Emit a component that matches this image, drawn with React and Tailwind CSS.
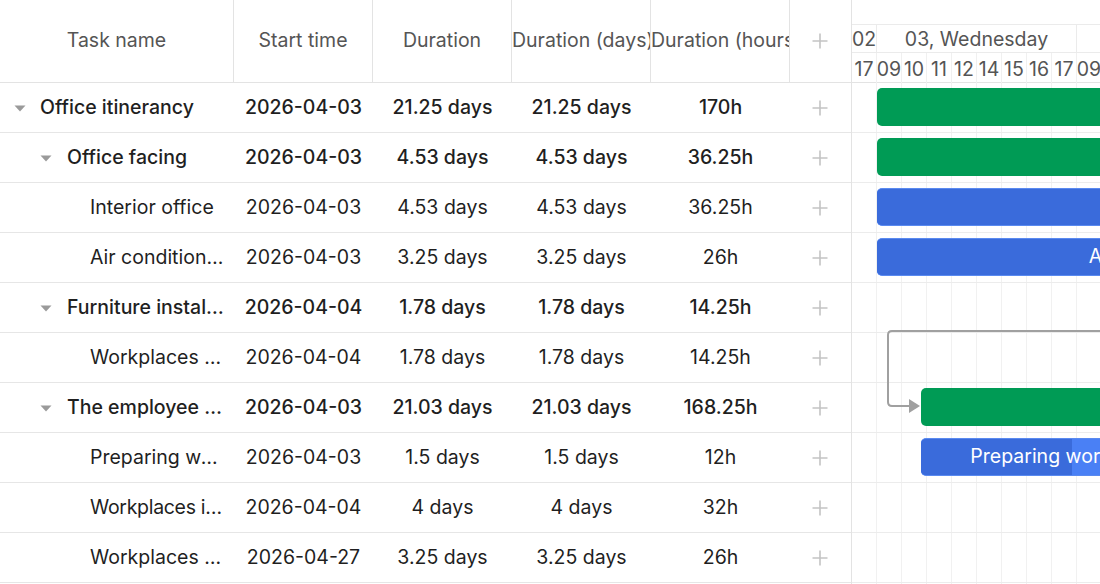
import React from "react";

const rows = [
  { level: 0, parent: true, name: "Office itinerancy", start: "2026-04-03", dur: "21.25 days", days: "21.25 days", hours: "170h", bar: { left: 25, width: 4250, color: "green" } },
  { level: 1, parent: true, name: "Office facing", start: "2026-04-03", dur: "4.53 days", days: "4.53 days", hours: "36.25h", bar: { left: 25, width: 906, color: "green" } },
  { level: 2, parent: false, name: "Interior office", start: "2026-04-03", dur: "4.53 days", days: "4.53 days", hours: "36.25h", bar: { left: 25, width: 906, color: "blue", progress: 0.6 } },
  { level: 2, parent: false, name: "Air conditioning systems", start: "2026-04-03", dur: "3.25 days", days: "3.25 days", hours: "26h", bar: { left: 25, width: 650, color: "blue", progress: 0.6 } },
  { level: 1, parent: true, name: "Furniture installation", start: "2026-04-04", dur: "1.78 days", days: "1.78 days", hours: "14.25h", bar: null },
  { level: 2, parent: false, name: "Workplaces assembly", start: "2026-04-04", dur: "1.78 days", days: "1.78 days", hours: "14.25h", bar: null },
  { level: 1, parent: true, name: "The employee relocation", start: "2026-04-03", dur: "21.03 days", days: "21.03 days", hours: "168.25h", bar: { left: 69, width: 4206, color: "green" } },
  { level: 2, parent: false, name: "Preparing workplaces", start: "2026-04-03", dur: "1.5 days", days: "1.5 days", hours: "12h", bar: { left: 69, width: 300, color: "blue", progress: 0.503 } },
  { level: 2, parent: false, tight: true, name: "Workplaces installation", start: "2026-04-04", dur: "4 days", days: "4 days", hours: "32h", bar: null },
  { level: 2, parent: false, name: "Workplaces moving", start: "2026-04-27", dur: "3.25 days", days: "3.25 days", hours: "26h", bar: null },
];

const textStart = { 0: "pl-[40px]", 1: "pl-[67px]", 2: "pl-[90px]" };
const caretLeft = { 0: "left-[14px]", 1: "left-[40px]" };

const hours = ["17", "09", "10", "11", "12", "14", "15", "16", "17", "09"];

function Plus() {
  return (
    <svg width="18" height="18" viewBox="0 0 18 18" className="block">
      <path d="M9 1.5V16.5M1.5 9H16.5" stroke="#c4c4c4" strokeWidth="1.6" fill="none" />
    </svg>
  );
}

function Caret() {
  return (
    <svg width="12" height="7" viewBox="0 0 12 7" className="block">
      <path d="M0.5 0.5H11.5L6 6.5Z" fill="#9a9a9a" />
    </svg>
  );
}

export default function App() {
  return (
    <div
      className="flex w-[1100px] h-[584px] overflow-hidden bg-white text-[19.5px] text-[#1f1f1f]"
      style={{ fontFamily: "Inter, 'Noto Sans', 'Liberation Sans', sans-serif" }}
    >
      {/* Grid */}
      <div className="w-[852px] shrink-0 border-r border-[#e3e3e3] flex flex-col">
        <div className="grid grid-cols-[234px_139px_139px_139px_139px_61px] h-[83px] border-b border-[#e3e3e3] text-[#555555] shrink-0">
          {["Task name", "Start time", "Duration", "Duration (days)", "Duration (hours)"].map((h) => (
            <div key={h} className="border-r border-[#e3e3e3] flex items-center overflow-hidden">
              <div className="w-full text-center whitespace-nowrap overflow-hidden">{h}</div>
            </div>
          ))}
          <div className="flex items-center justify-center pr-[2px]">
            <Plus />
          </div>
        </div>
        {rows.map((r, i) => (
          <div
            key={i}
            className={`grid grid-cols-[234px_139px_139px_139px_139px_61px] h-[50px] shrink-0 border-b border-[#e6e6e6] pt-[1px] ${r.parent ? "font-medium" : ""}`}
          >
            <div className={`relative flex items-center pr-[10px] min-w-0 ${textStart[r.level]}`}>
              {r.parent && (
                <div className={`absolute top-[21px] ${caretLeft[r.level]}`}>
                  <Caret />
                </div>
              )}
              <div className={`truncate ${r.tight ? "tracking-[-0.3px]" : ""}`}>{r.name}</div>
            </div>
            <div className="flex items-center justify-center whitespace-nowrap">{r.start}</div>
            <div className="flex items-center justify-center whitespace-nowrap">{r.dur}</div>
            <div className="flex items-center justify-center whitespace-nowrap">{r.days}</div>
            <div className="flex items-center justify-center whitespace-nowrap">{r.hours}</div>
            <div className="flex items-center justify-center pr-[2px]">
              <Plus />
            </div>
          </div>
        ))}
      </div>

      {/* Gantt */}
      <div className="flex-1 min-w-0 overflow-hidden flex flex-col">
        <div className="h-[83px] shrink-0 border-b border-[#e3e3e3] flex flex-col text-[#555555]">
          <div className="h-[25px] border-b border-[#ebebeb] shrink-0" />
          <div className="h-[28px] border-b border-[#ebebeb] flex shrink-0 whitespace-nowrap">
            <div className="w-[25px] shrink-0 border-r border-[#ebebeb] flex items-center justify-center pt-[3px]">02</div>
            <div className="w-[200px] shrink-0 border-r border-[#ebebeb] flex items-center justify-center pt-[3px]">03, Wednesday</div>
            <div className="w-[200px] shrink-0 flex items-center justify-center pt-[3px]">04, Thursday</div>
          </div>
          <div className="flex-1 flex whitespace-nowrap">
            {hours.map((h, i) => (
              <div key={i} className="w-[25px] shrink-0 border-r border-[#f0f0f0] flex items-center justify-center pt-[2px]">
                {h}
              </div>
            ))}
          </div>
        </div>
        <div className="relative flex-1">
          <div className="absolute inset-0 flex">
            {hours.map((h, i) => (
              <div key={i} className="w-[25px] shrink-0 h-full border-r border-[#f1f1f1]" />
            ))}
          </div>
          <div className="relative">
            {rows.map((r, i) => (
              <div key={i} className="relative h-[50px] border-b border-[#ececec]">
                {r.bar && (
                  <div
                    className={`absolute top-[5px] h-[38px] rounded-[5px] overflow-hidden flex items-center justify-center whitespace-nowrap text-white font-normal ${
                      r.bar.color === "green" ? "bg-[#009b55]" : "bg-[#4a80f5] border-y border-[#5a8af0]"
                    }`}
                    style={{ left: r.bar.left, width: r.bar.width }}
                  >
                    {r.bar.color === "blue" && (
                      <div
                        className="absolute left-0 top-0 bottom-0 bg-[#3a6bdb]"
                        style={{ width: r.bar.width * r.bar.progress }}
                      />
                    )}
                    <span className="relative">{r.name}</span>
                  </div>
                )}
              </div>
            ))}
          </div>
          <svg className="absolute left-0 top-0" width="248" height="500" viewBox="0 0 248 500">
            <path d="M248 248H40Q36 248 36 252V319Q36 323 40 323H60" stroke="#a0a0a0" strokeWidth="2" fill="none" />
            <path d="M57 316L68 323L57 330Z" fill="#a0a0a0" />
          </svg>
        </div>
      </div>
    </div>
  );
}
